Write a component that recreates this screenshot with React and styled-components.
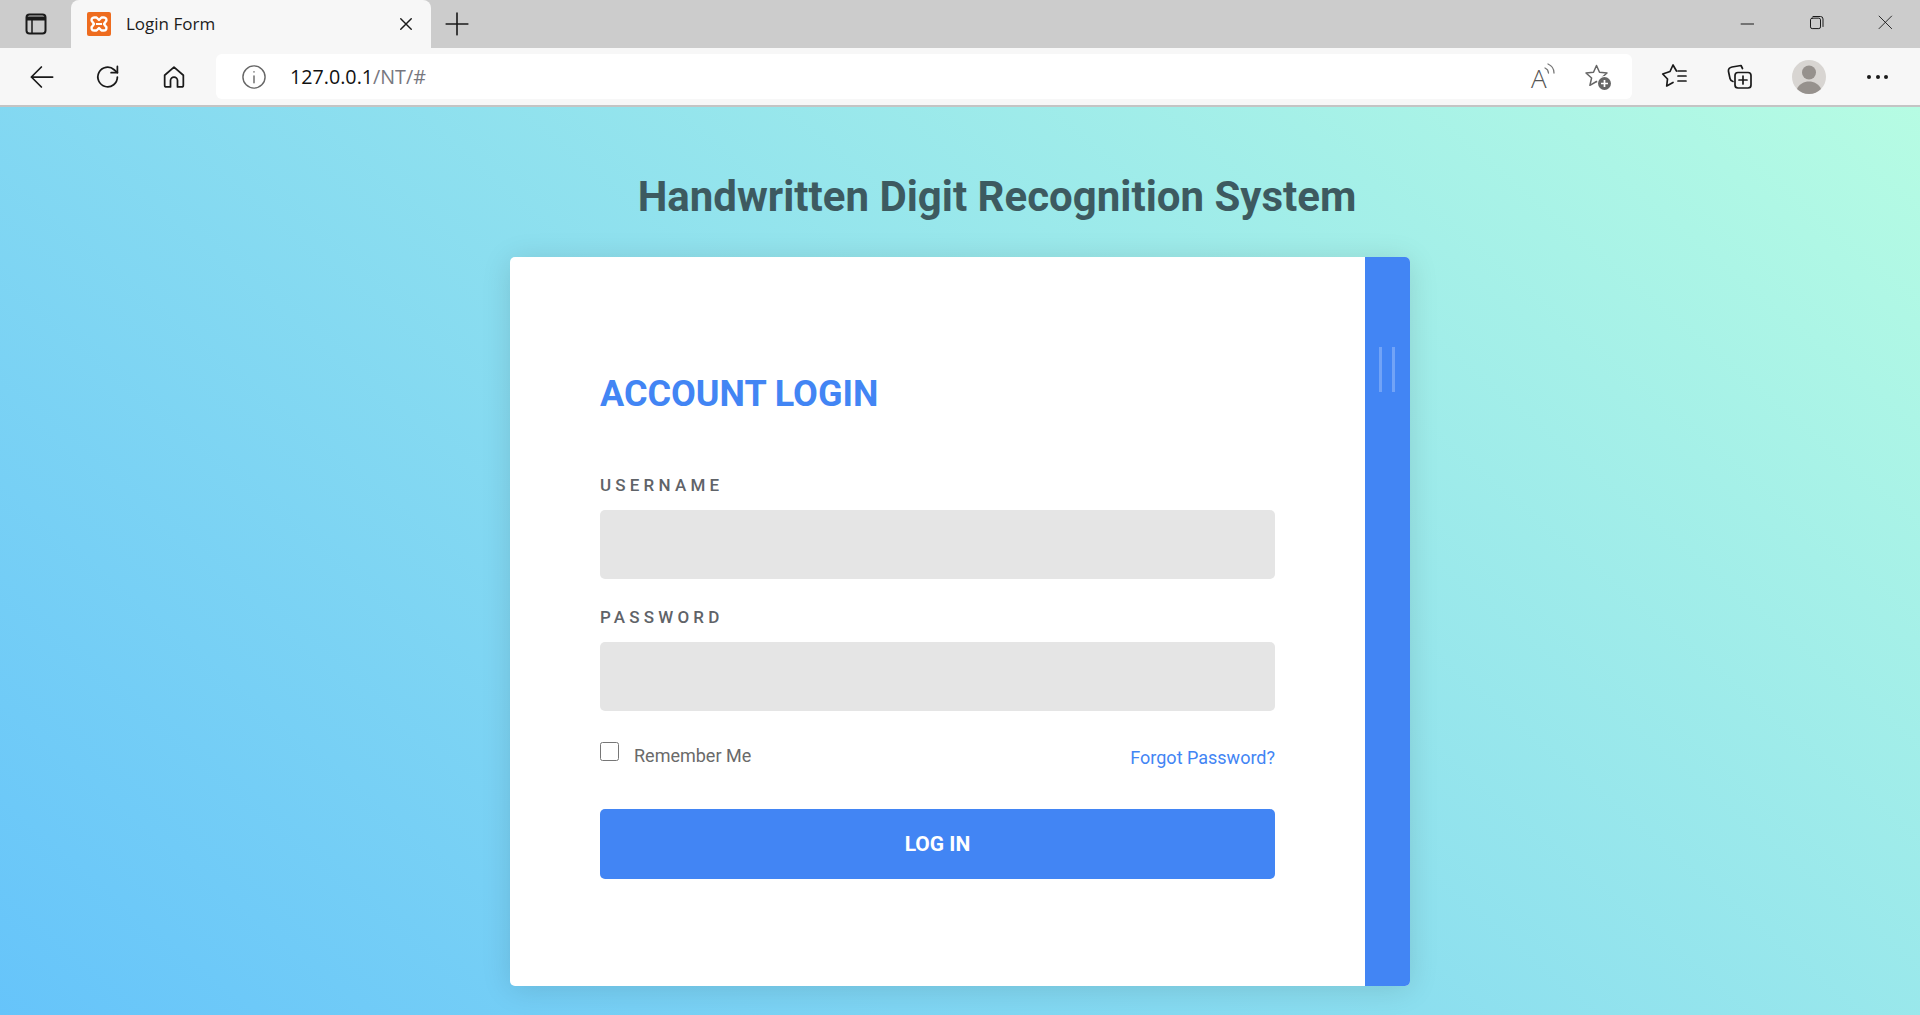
import styled, { createGlobalStyle } from "styled-components";

const GlobalStyle = createGlobalStyle`
  html, body {
    margin: 0;
    padding: 0;
    height: 100%;
    overflow: hidden;
  }
  body {
    font-family: Roboto, "Liberation Sans", sans-serif;
  }
  * {
    box-sizing: border-box;
  }
`;

const Icon = ({ size = 24, children, color = "#1a1a1a", width = 1.6 }) => (
  <svg
    width={size}
    height={size}
    viewBox="0 0 24 24"
    fill="none"
    stroke={color}
    strokeWidth={width}
    strokeLinecap="round"
    strokeLinejoin="round"
  >
    {children}
  </svg>
);

const App = () => {
  return (
    <>
      <GlobalStyle />
      <TabBar>
        <SideTabButton>
          <Icon size={24} width={2}>
            <rect x="2.500" y="2.500" width="19" height="19" rx="3" />
            <path d="M3 6.500h18" strokeWidth="4" strokeLinecap="butt" />
            <path d="M8 8v13" strokeWidth="1.500" />
          </Icon>
        </SideTabButton>
        <Tab>
          <Favicon>
            <svg width="24" height="24" viewBox="0 0 24 24">
              <rect width="24" height="24" rx="2" fill="#ee6c1f" />
              <path
                d="M7 5.500h2.500L12 8l2.500-2.500H17a2.500 2.500 0 0 1 1.500 4.500L17 12l1.500 2a2.500 2.500 0 0 1-1.500 4.500h-2.500L12 16l-2.500 2.500H7A2.500 2.500 0 0 1 5.500 14L7 12 5.500 10A2.500 2.500 0 0 1 7 5.500z"
                fill="none"
                stroke="#fff"
                strokeWidth="2.400"
                strokeLinejoin="round"
              />
              <path d="M9 12h6" stroke="#fff" strokeWidth="2" />
            </svg>
          </Favicon>
          <TabTitle>Login Form</TabTitle>
          <TabClose>
            <Icon size={18} width={1.9}>
              <path d="M5 5l14 14M19 5L5 19" />
            </Icon>
          </TabClose>
        </Tab>
        <NewTab>
          <Icon size={26} width={1.5}>
            <path d="M12 2v20M2 12h20" />
          </Icon>
        </NewTab>
        <WindowButtons>
          <WindowButton>
            <Icon size={20} width={1.2}>
              <path d="M2.500 12h15" />
            </Icon>
          </WindowButton>
          <WindowButton>
            <Icon size={20} width={1.2}>
              <rect x="3" y="5" width="12" height="12.500" rx="2" />
              <path d="M6 3h9a3 3 0 0 1 3 3v9" />
            </Icon>
          </WindowButton>
          <WindowButton>
            <Icon size={20} width={1.1}>
              <path d="M2.500 2.500l15 15M17.500 2.500l-15 15" />
            </Icon>
          </WindowButton>
        </WindowButtons>
      </TabBar>
      <Toolbar>
        <NavButton>
          <Icon size={30} width={1.4}>
            <path d="M3.500 12h17M3.500 12l8-8M3.500 12l8 8" />
          </Icon>
        </NavButton>
        <NavButton>
          <Icon size={30} width={1.4}>
            <path d="M19.500 12a7.800 7.800 0 1 1-2.600-5.800L19.500 8.500" />
            <path d="M19.500 3.500v5h-5" />
          </Icon>
        </NavButton>
        <NavButton>
          <Icon size={28} width={1.5}>
            <path d="M4 10.500L12 3.500l8 7V19a1.500 1.500 0 0 1-1.500 1.500H15V15a3 3 0 0 0-6 0v5.500H5.500A1.500 1.500 0 0 1 4 19z" />
          </Icon>
        </NavButton>
        <AddressBar>
          <InfoIcon>
            <Icon size={28} color="#666" width={1.2}>
              <circle cx="12" cy="12" r="9.500" />
              <path d="M12 11v6M12 7.400v.4" />
            </Icon>
          </InfoIcon>
          <Url>
            127.0.0.1<UrlPath>/NT/#</UrlPath>
          </Url>
          <AddressActions>
            <ReadAloud>
              <ReadLetter>A</ReadLetter>
              <ReadWaves>
                <svg width="12" height="16" viewBox="0 0 12 16" fill="none" stroke="#777" strokeWidth="1.300" strokeLinecap="round">
                  <path d="M1 5c2 .8 3.300 2.500 3.500 5" />
                  <path d="M4 1c3.500 1.500 6 5 6 9" />
                </svg>
              </ReadWaves>
            </ReadAloud>
            <AddressIcon>
              <svg width="28" height="28" viewBox="0 0 28 28" fill="none">
                <path
                  d="M12.500 2.500l3 6.800 7.500.7-5.600 5 1.700 7.300-6.600-3.800-6.600 3.800 1.700-7.300L2 10l7.500-.7z"
                  stroke="#666"
                  strokeWidth="1.500"
                  strokeLinejoin="round"
                />
                <circle cx="20.500" cy="20.500" r="7.500" fill="#fff" />
                <circle cx="20.500" cy="20.500" r="6.500" fill="#666" />
                <path d="M20.500 17v7M17 20.500h7" stroke="#fff" strokeWidth="1.700" />
              </svg>
            </AddressIcon>
          </AddressActions>
        </AddressBar>
        <ToolButtons>
          <ToolButton>
            <svg width="28" height="28" viewBox="0 0 28 28" fill="none" stroke="#1a1a1a" strokeWidth="1.700" strokeLinejoin="round" strokeLinecap="round">
              <path d="M16.500 8L13 2l-3 6.500L2.700 11l4.800 5-.8 7 6.300-3.500" />
              <path d="M18 8h8M18 13h8M18 18h8" />
            </svg>
          </ToolButton>
          <ToolButton>
            <svg width="28" height="28" viewBox="0 0 28 28" fill="none" stroke="#1a1a1a" strokeWidth="1.700" strokeLinejoin="round" strokeLinecap="round">
              <rect x="9" y="9.500" width="16" height="15.500" rx="3" />
              <path d="M16.500 5.500L15 2.500l-9 1.500C3.500 4.500 2 6 2.500 8.500l1.500 7c.3 1.500 1.500 2.500 3 3" />
              <path d="M17 13v8M13 17h8" />
            </svg>
          </ToolButton>
          <Avatar>
            <svg width="34" height="34" viewBox="0 0 34 34">
              <circle cx="17" cy="17" r="17" fill="#d8d5d2" />
              <circle cx="17" cy="12.500" r="7" fill="#96918d" />
              <path d="M5 29c2-5 7-7.500 12-7.500S27 24 29 29c-3 3-7.500 5-12 5S8 32 5 29z" fill="#96918d" />
            </svg>
          </Avatar>
          <MoreDots>
            <Dot />
            <Dot />
            <Dot />
          </MoreDots>
        </ToolButtons>
      </Toolbar>
      <Page>
        <Heading>Handwritten Digit Recognition System</Heading>
        <Card>
          <FormPanel>
            <LoginTitle>ACCOUNT LOGIN</LoginTitle>
            <Field>
              <FieldLabel>USERNAME</FieldLabel>
              <TextInput type="text" />
            </Field>
            <Field>
              <FieldLabel>PASSWORD</FieldLabel>
              <TextInput type="password" />
            </Field>
            <OptionsRow>
              <RememberLabel>
                <CheckBox type="checkbox" />
                <span>Remember Me</span>
              </RememberLabel>
              <ForgotLink href="#">Forgot Password?</ForgotLink>
            </OptionsRow>
            <LoginButton type="button">LOG IN</LoginButton>
          </FormPanel>
          <SideStrip>
            <StripLine />
            <StripLine />
          </SideStrip>
        </Card>
      </Page>
    </>
  );
};

const TabBar = styled.div`
  height: 48px;
  background: #cccccc;
  display: flex;
  align-items: stretch;
`;

const SideTabButton = styled.div`
  width: 71px;
  display: flex;
  align-items: center;
  justify-content: center;
`;

const Tab = styled.div`
  width: 360px;
  background: #f7f7f7;
  border-radius: 8px 8px 0 0;
  display: flex;
  align-items: center;
  padding: 0 16px 0 16px;
`;

const Favicon = styled.div`
  width: 24px;
  height: 24px;
  display: flex;
`;

const TabTitle = styled.div`
  flex: 1;
  margin: -1px 0 0 15px;
  font-family: "Open Sans", "Noto Sans", sans-serif;
  font-size: 17px;
  color: #1c1c1c;
`;

const TabClose = styled.div`
  display: flex;
`;

const NewTab = styled.div`
  width: 52px;
  display: flex;
  align-items: center;
  justify-content: center;
`;

const WindowButtons = styled.div`
  margin-left: auto;
  display: flex;
  padding-right: 23px;
  gap: 49px;
  align-items: center;
`;

const WindowButton = styled.div`
  width: 20px;
  display: flex;
  justify-content: center;
`;

const Toolbar = styled.div`
  height: 59px;
  background: #f7f7f7;
  border-bottom: 2px solid #c4c4c4;
  display: flex;
  align-items: center;
  padding: 0 0 0 25px;
`;

const NavButton = styled.div`
  width: 34px;
  height: 34px;
  display: flex;
  align-items: center;
  justify-content: center;
  margin-right: 32px;
  &:nth-child(3) {
    margin-right: 0;
  }
`;

const AddressBar = styled.div`
  width: 1416px;
  height: 45px;
  margin-left: 25px;
  background: #fff;
  border-radius: 6px;
  display: flex;
  align-items: center;
  padding: 0 20px 0 24px;
`;

const InfoIcon = styled.div`
  display: flex;
`;

const Url = styled.div`
  margin-left: 22px;
  font-family: "Open Sans", "Noto Sans", sans-serif;
  font-size: 19.7px;
  color: #111;
`;

const UrlPath = styled.span`
  color: #77777f;
`;

const AddressActions = styled.div`
  margin-left: auto;
  display: flex;
  align-items: center;
  gap: 25px;
`;

const ReadAloud = styled.div`
  position: relative;
  width: 28px;
  height: 28px;
`;

const ReadLetter = styled.span`
  display: block;
  font-family: "Open Sans", sans-serif;
  font-weight: 300;
  font-size: 26px;
  line-height: 30px;
  color: #555;
`;

const ReadWaves = styled.span`
  position: absolute;
  right: 3px;
  top: 0;
  display: flex;
`;

const AddressIcon = styled.div`
  display: flex;
`;

const ToolButtons = styled.div`
  display: flex;
  align-items: center;
  margin-left: 28px;
`;

const ToolButton = styled.div`
  width: 28px;
  height: 28px;
  display: flex;
  margin-right: 38px;
`;

const Avatar = styled.div`
  width: 34px;
  height: 34px;
  display: flex;
`;

const MoreDots = styled.div`
  display: flex;
  gap: 4.5px;
  margin-left: 41px;
`;

const Dot = styled.span`
  width: 4px;
  height: 4px;
  border-radius: 50%;
  background: #1a1a1a;
`;

const Page = styled.div`
  height: 908px;
  background: linear-gradient(40deg, #66c4fa 0%, #b6fce3 100%);
  display: flex;
  flex-direction: column;
  align-items: center;
`;

const Heading = styled.h1`
  margin: 0;
  padding: 65px 0 0 74px;
  height: 150px;
  font-size: 42px;
  line-height: 49px;
  font-weight: 700;
  color: #3d5a60;
`;

const Card = styled.div`
  width: 900px;
  height: 729px;
  background: #fff;
  border-radius: 5px;
  overflow: hidden;
  box-shadow: 0 3px 30px rgba(0, 0, 0, 0.12);
  display: flex;
`;

const FormPanel = styled.form`
  flex: 1;
  padding: 116px 90px 0;
  display: flex;
  flex-direction: column;
`;

const LoginTitle = styled.h2`
  margin: 0 0 60px;
  font-size: 36px;
  line-height: 42px;
  font-weight: 700;
  color: #4285f4;
`;

const Field = styled.div`
  margin-bottom: 28px;
`;

const FieldLabel = styled.label`
  display: block;
  padding-top: 1px;
  margin-bottom: 15px;
  font-size: 17px;
  line-height: 19px;
  font-weight: 500;
  letter-spacing: 4.2px;
  color: #5f6368;
`;

const TextInput = styled.input`
  display: block;
  width: 100%;
  height: 69px;
  border: none;
  border-radius: 5px;
  background: #e5e5e5;
  outline: none;
`;

const OptionsRow = styled.div`
  display: flex;
  justify-content: space-between;
  align-items: flex-start;
  height: 70px;
  padding-top: 4px;
`;

const RememberLabel = styled.label`
  display: flex;
  align-items: flex-start;
  font-size: 18px;
  line-height: 26px;
  color: #6a6a6a;
`;

const CheckBox = styled.input`
  width: 19px;
  height: 19px;
  margin: -1px 15px 0 0;
`;

const ForgotLink = styled.a`
  margin-top: 3px;
  font-size: 18px;
  line-height: 24px;
  color: #4285f4;
  text-decoration: none;
`;

const LoginButton = styled.button`
  height: 70px;
  border: none;
  border-radius: 5px;
  background: #4285f4;
  color: #fff;
  font-family: inherit;
  font-size: 21px;
  font-weight: 700;
`;

const SideStrip = styled.div`
  width: 45px;
  background: #4285f4;
  display: flex;
  justify-content: center;
  align-items: flex-start;
  gap: 10px;
  padding: 90px 1px 0 0;
`;

const StripLine = styled.span`
  width: 3px;
  height: 45px;
  background: rgba(255, 255, 255, 0.25);
`;

export default App;
